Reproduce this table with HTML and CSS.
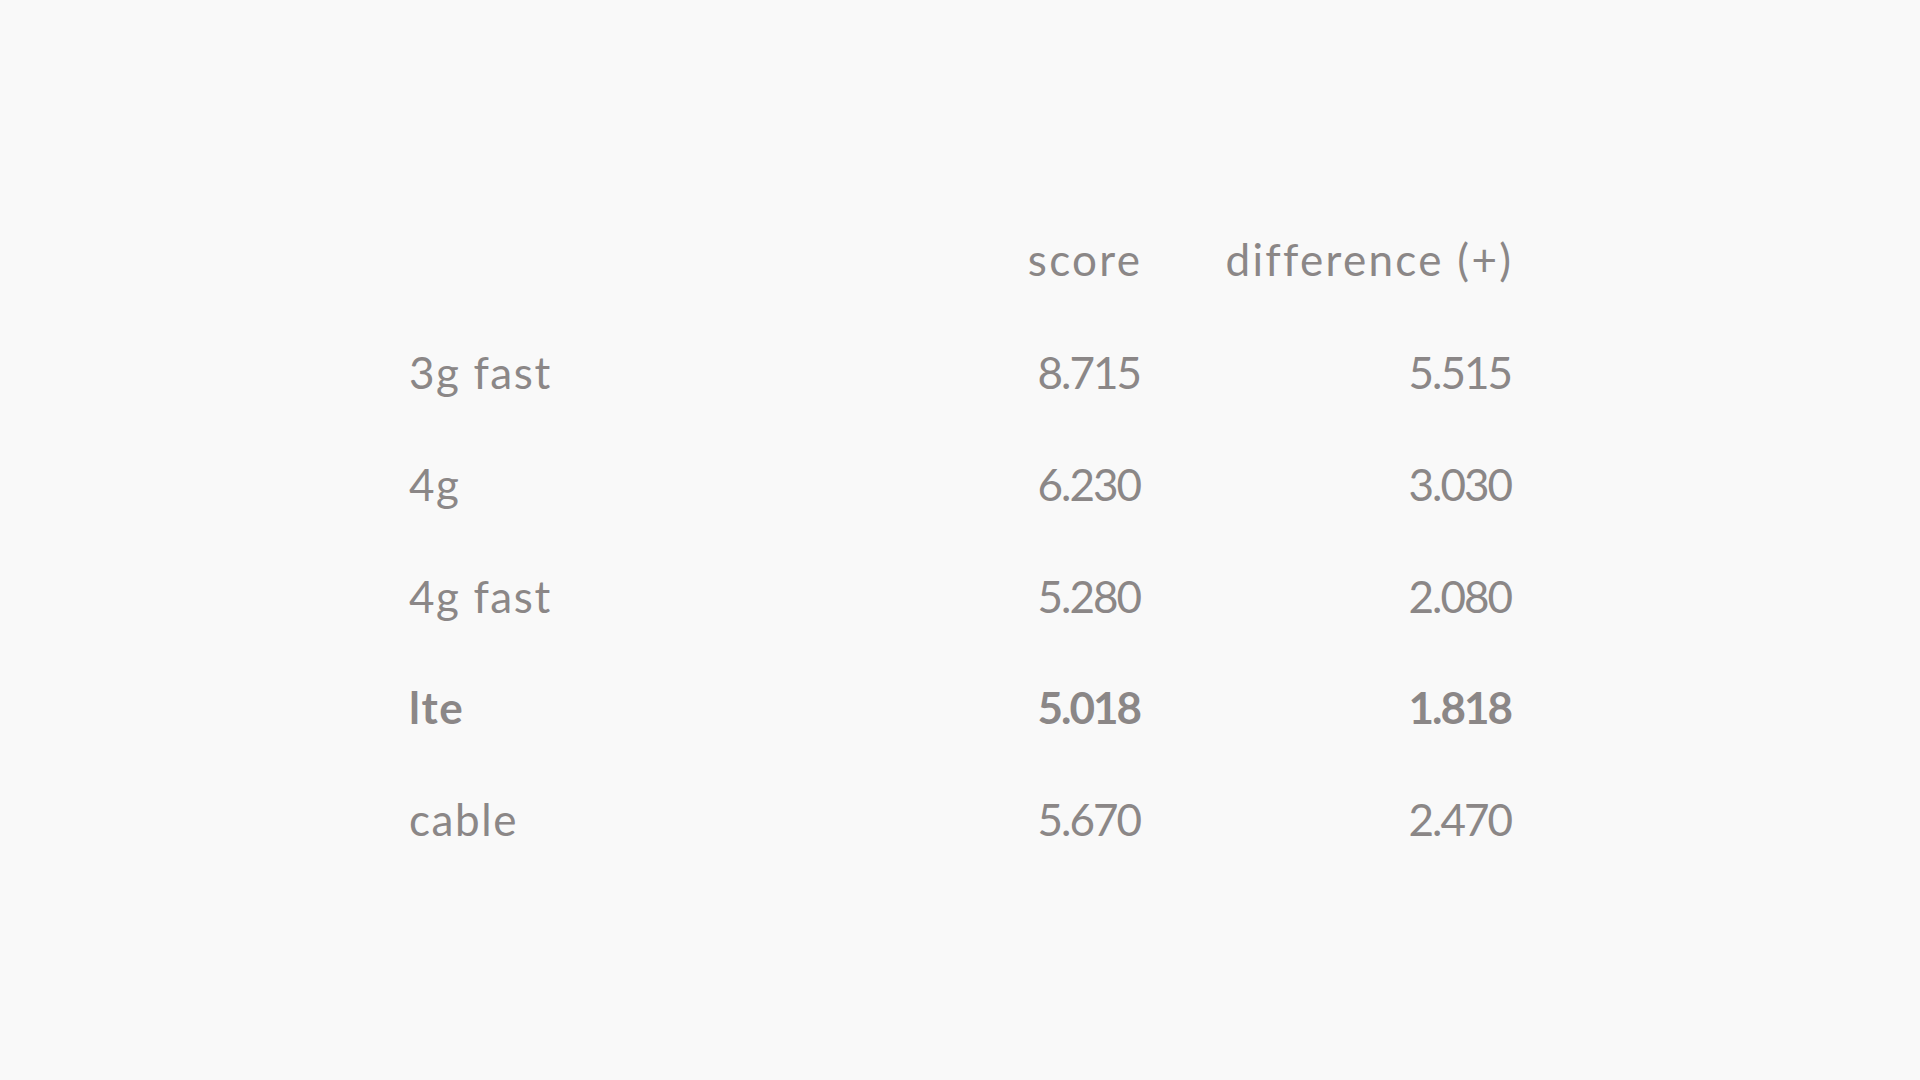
FILE: index.html
```html
<!DOCTYPE html>
<html lang="en">
<head>
<meta charset="utf-8">
<title>Network scores</title>
<link rel="stylesheet" href="styles.css">
</head>
<body>
<main class="page">
  <div class="table">
    <div class="row head">
      <div class="cell label"></div>
      <div class="cell num word">score</div>
      <div class="cell num word">difference (+)</div>
    </div>
    <div class="row">
      <div class="cell label">3g fast</div>
      <div class="cell num">8.715</div>
      <div class="cell num">5.515</div>
    </div>
    <div class="row">
      <div class="cell label">4g</div>
      <div class="cell num">6.230</div>
      <div class="cell num">3.030</div>
    </div>
    <div class="row">
      <div class="cell label">4g fast</div>
      <div class="cell num">5.280</div>
      <div class="cell num">2.080</div>
    </div>
    <div class="row strong">
      <div class="cell label">lte</div>
      <div class="cell num">5.018</div>
      <div class="cell num">1.818</div>
    </div>
    <div class="row">
      <div class="cell label">cable</div>
      <div class="cell num">5.670</div>
      <div class="cell num">2.470</div>
    </div>
  </div>
</main>
</body>
</html>
```

FILE: styles.css
```css
html, body {
  margin: 0;
  padding: 0;
  background: #f9f9f9;
}

.page {
  min-height: 100vh;
  display: flex;
  align-items: center;
  justify-content: center;
  font-family: Lato, "Open Sans", sans-serif;
  font-size: 44px;
  color: #8b8787;
}

.table {
  width: 1102px;
  display: flex;
  flex-direction: column;
}

.row {
  display: grid;
  grid-template-columns: 1fr 200px 371px;
  height: 111.7px;
  line-height: 111.7px;
}

.row.head {
  height: 113.3px;
}

.row.strong {
  font-weight: 700;
}

.cell {
  white-space: nowrap;
}

.label {
  letter-spacing: 1.6px;
}

.num {
  text-align: right;
  letter-spacing: -2px;
  margin-right: 0;
}

.num.word {
  letter-spacing: 2.3px;
  margin-right: -2.3px;
}
```
